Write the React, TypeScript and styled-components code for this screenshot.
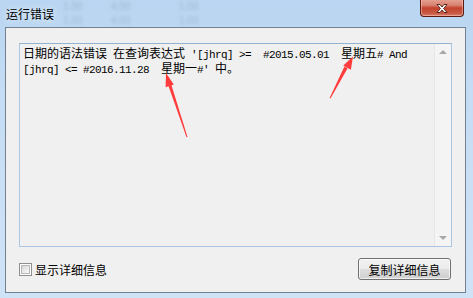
import React from 'react';
import styled, { createGlobalStyle } from 'styled-components';

const Global = createGlobalStyle`
  html, body { margin: 0; padding: 0; background: #c6dcf2; }
  body { width: 473px; height: 298px; overflow: hidden; }
`;

const Window = styled.div`
  position: relative;
  width: 473px;
  height: 298px;
  box-sizing: border-box;
  padding: 0 7px 5px 5px;
  display: flex;
  flex-direction: column;
  background: linear-gradient(180deg, #b9d5f1 0%, #c4dcf4 30%, #cfe3f7 100%);
  font-family: "Noto Sans CJK SC", sans-serif;
  overflow: hidden;
`;

const TitleBar = styled.div`
  position: relative;
  height: 27px;
  flex: 0 0 27px;
  display: flex;
  align-items: flex-start;
`;

const Ghost = styled.div`
  position: absolute;
  left: 58px;
  top: 2px;
  display: grid;
  grid-template-columns: 48px 68px 40px;
  row-gap: 4px;
  font-family: "Liberation Sans", sans-serif;
  font-size: 10px;
  line-height: 10px;
  color: rgba(90, 110, 135, 0.28);
  filter: blur(1.4px);
`;

const Title = styled.div`
  position: relative;
  margin: 5px 0 0 1px;
  font-size: 12px;
  line-height: 17px;
  color: #000;
  text-shadow: 0 0 6px rgba(255, 255, 255, 0.9);
`;

const CloseButton = styled.div`
  position: absolute;
  right: 2px;
  top: -2px;
  width: 44px;
  height: 19px;
  box-sizing: border-box;
  border: 1px solid #5c1a12;
  border-top: none;
  border-radius: 0 0 4px 4px;
  background: linear-gradient(180deg, #e9a99c 0%, #d88270 40%, #c3432e 55%, #c85a44 85%, #d9856f 100%);
  box-shadow: inset 0 0 0 1px rgba(255, 200, 190, 0.5);
  display: flex;
  align-items: center;
  justify-content: center;
  padding-top: 2px;
`;

const Client = styled.div`
  flex: 1;
  box-sizing: border-box;
  border: 1px solid #73808f;
  background: #f0f0f0;
  padding: 15px 13px 0 13px;
  display: flex;
  flex-direction: column;
`;

const TextBox = styled.div`
  height: 204px;
  box-sizing: border-box;
  border: 1px solid #aac6e0;
  border-top-color: #93b2d0;
  background: #f0f0f0;
  display: flex;
`;

const Message = styled.div`
  flex: 1;
  padding: 1px 3px;
  font-family: "Liberation Mono", monospace;
  font-size: 11px;
  letter-spacing: -0.6px;
  line-height: 15px;
  color: #000;
  white-space: pre;
`;

const Line = styled.div`
  height: 15px;
`;

const Han = styled.span`
  font-family: "Noto Sans CJK SC", sans-serif;
  font-size: 12px;
  letter-spacing: 0;
  line-height: 15px;
`;

const ScrollBar = styled.div`
  width: 16px;
  border-left: 1px solid #e6e6e6;
  background: #f4f4f4;
  display: flex;
  flex-direction: column;
  justify-content: space-between;
  align-items: center;
  padding: 6px 0 6px;
`;

const Arrow = styled.div<{ $down?: boolean }>`
  width: 0;
  height: 0;
  border-left: 4px solid transparent;
  border-right: 4px solid transparent;
  ${(p) => (p.$down ? 'border-top: 4px solid #a8a8a8;' : 'border-bottom: 4px solid #a8a8a8;')}
`;

const BottomRow = styled.div`
  margin-top: 11px;
  height: 22px;
  display: flex;
  align-items: center;
  justify-content: space-between;
`;

const CheckLabel = styled.label`
  display: flex;
  align-items: center;
  gap: 3px;
  font-size: 12px;
  color: #000;
`;

const CheckBox = styled.span`
  width: 13px;
  height: 13px;
  box-sizing: border-box;
  border: 1px solid #8e8f8f;
  background: #fff;
  padding: 1px;
  display: flex;
  &::after {
    content: '';
    flex: 1;
    border: 1px solid #b7b7b7;
    background: linear-gradient(135deg, #d6d6d6 0%, #f0f0f0 70%, #fafafa 100%);
  }
`;

const Button = styled.button`
  width: 93px;
  height: 22px;
  margin-right: 1px;
  box-sizing: border-box;
  border: 1px solid #707070;
  border-radius: 3px;
  background: linear-gradient(180deg, #f2f2f2 0%, #ebebeb 48%, #dddddd 52%, #cfcfcf 100%);
  box-shadow: inset 0 0 0 1px rgba(255, 255, 255, 0.7);
  font-family: "Noto Sans CJK SC", sans-serif;
  font-size: 12px;
  color: #000;
  padding: 0;
  display: flex;
  align-items: center;
  justify-content: center;
`;

const Annotations = styled.svg`
  position: absolute;
  left: 0;
  top: 0;
  pointer-events: none;
`;

type Seg = [boolean, string];

const lines: Seg[][] = [
  [
    [true, '日期的语法错误'],
    [false, ' '],
    [true, '在查询表达式'],
    [false, " '[jhrq] >=  #2015.05.01  "],
    [true, '星期五'],
    [false, '# And'],
  ],
  [
    [false, '[jhrq] <= #2016.11.28  '],
    [true, '星期一'],
    [false, "#' "],
    [true, '中。'],
  ],
];

const ghosts = ['1.00', '4.00', '1.00', '1.00', '4.00', '1.00'];

export default function App() {
  return (
    <>
      <Global />
      <Window>
        <TitleBar>
          <Ghost>
            {ghosts.map((g, i) => (
              <span key={i}>{g}</span>
            ))}
          </Ghost>
          <Title>运行错误</Title>
          <CloseButton>
            <svg width="14" height="11" viewBox="0 0 14 11">
              <path
                d="M2 1.5 L5 1.5 L7 4 L9 1.5 L12 1.5 L8.6 5.5 L12 9.5 L9 9.5 L7 7 L5 9.5 L2 9.5 L5.4 5.5 Z"
                fill="#ffffff"
                stroke="#4a1a14"
                strokeWidth="0.9"
                strokeLinejoin="round"
              />
            </svg>
          </CloseButton>
        </TitleBar>
        <Client>
          <TextBox>
            <Message>
              {lines.map((line, i) => (
                <Line key={i}>
                  {line.map(([han, t], j) => (han ? <Han key={j}>{t}</Han> : <React.Fragment key={j}>{t}</React.Fragment>))}
                </Line>
              ))}
            </Message>
            <ScrollBar>
              <Arrow />
              <Arrow $down />
            </ScrollBar>
          </TextBox>
          <BottomRow>
            <CheckLabel>
              <CheckBox />
              显示详细信息
            </CheckLabel>
            <Button>复制详细信息</Button>
          </BottomRow>
        </Client>
        <Annotations width="473" height="298" viewBox="0 0 473 298">
          <polygon points="187.5,137 186.5,137.3 167.8,84 170.8,83" fill="#ff3b3b" />
          <polygon points="166,73 173.8,84.5 165.6,87.2" fill="#ff3b3b" />
          <polygon points="330.5,98.5 329.6,98 344.4,66.5 347.6,68.3" fill="#ff3b3b" />
          <polygon points="353,56.5 350.9,69.8 343.3,65.4" fill="#ff3b3b" />
        </Annotations>
      </Window>
    </>
  );
}
